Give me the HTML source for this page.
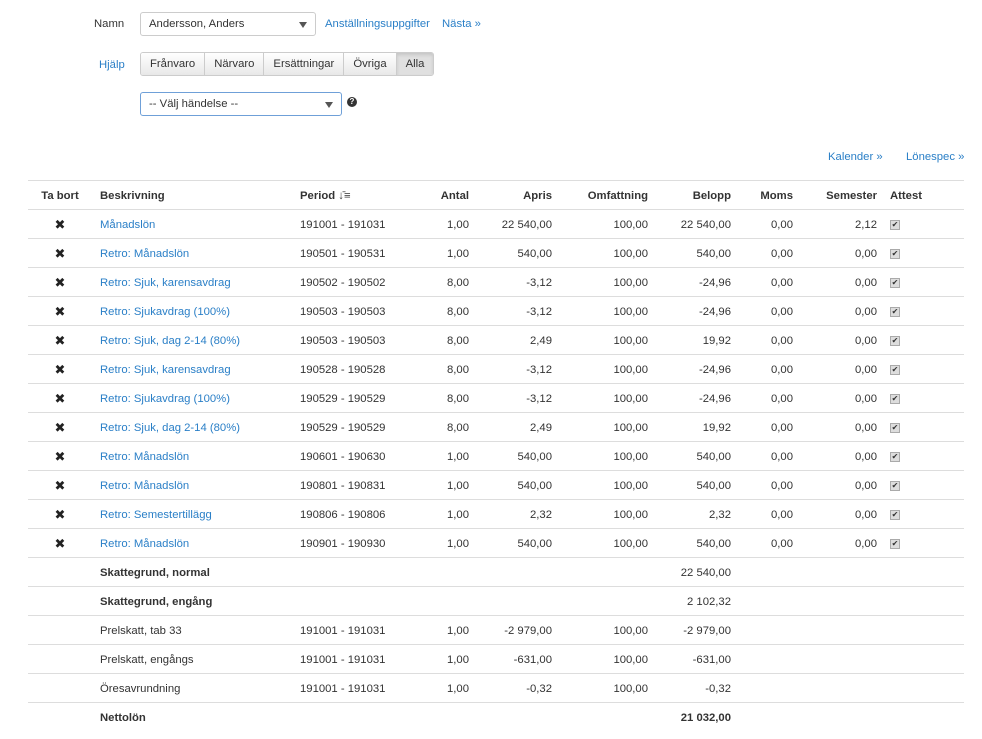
<!DOCTYPE html>
<html><head><meta charset="utf-8"><style>
body{margin:0;background:#fff;font-family:"Liberation Sans",Arial,sans-serif;font-size:11.3px;color:#333;width:982px;height:739px;overflow:hidden;position:relative}
a{color:#2a7fc7;text-decoration:none}
.abs{position:absolute}
.sel{position:absolute;border:1px solid #ccc;border-radius:3px;background:#fff;box-sizing:border-box;padding-left:8px;line-height:23px}
.sel:after{content:"";position:absolute;right:8px;top:9px;border-left:4px solid transparent;border-right:4px solid transparent;border-top:6px solid #555}
.btns{position:absolute;left:140px;top:52px;display:flex;border:1px solid #ccc;border-radius:3px;overflow:hidden}
.btns div{padding:0 9px;line-height:23px;height:22px;background:linear-gradient(#fff,#e8e8e8);border-left:1px solid #ccc}
.btns div:first-child{border-left:none}
.btns .act{background:#e0e0e0;box-shadow:inset 0 2px 3px rgba(0,0,0,.12)}
table{position:absolute;left:28px;top:180px;border-collapse:collapse;table-layout:fixed;width:936px}
td,th{height:29px;border-top:1px solid #ddd;padding:2px 8px 0;box-sizing:border-box;white-space:nowrap;overflow:hidden;font-size:11.3px}
th{text-align:left;font-weight:bold;color:#333}
.c{text-align:center}.r{text-align:right}
.x{font-size:13px;color:#222}
.cb{display:inline-block;width:8px;height:8px;border:1px solid #aaa;background:#ddd;font-size:8px;line-height:8px;text-align:center;color:#333;vertical-align:middle}
b{font-weight:bold}
</style></head><body>
<div class="abs" style="left:94px;top:18px">Namn</div>
<div class="sel" style="left:140px;top:12px;width:176px;height:24px">Andersson, Anders</div>
<a class="abs" style="left:325px;top:18px">Anställningsuppgifter</a>
<a class="abs" style="left:442px;top:18px">Nästa »</a>
<a class="abs" style="left:99px;top:59px">Hjälp</a>
<div class="btns"><div>Frånvaro</div><div>Närvaro</div><div>Ersättningar</div><div>Övriga</div><div class="act">Alla</div></div>
<div class="sel" style="left:140px;top:92px;width:202px;height:24px;border-color:#6fa0d8">-- Välj händelse --</div>
<div class="abs" style="left:347px;top:97px;width:10px;height:10px;border-radius:50%;background:#333;color:#fff;font-size:8px;line-height:10px;text-align:center;font-weight:bold">?</div>
<a class="abs" style="left:828px;top:151px">Kalender »</a>
<a class="abs" style="left:906px;top:151px">Lönespec »</a>
<table>
<colgroup><col style="width:64px"><col style="width:200px"><col style="width:108px"><col style="width:77px"><col style="width:83px"><col style="width:96px"><col style="width:83px"><col style="width:62px"><col style="width:84px"><col style="width:79px"></colgroup>
<tr><th class="c">Ta bort</th><th>Beskrivning</th><th>Period <span style="font-weight:normal">↓̄≡</span></th><th class="r">Antal</th><th class="r">Apris</th><th class="r">Omfattning</th><th class="r">Belopp</th><th class="r">Moms</th><th class="r">Semester</th><th style="padding-left:5px">Attest</th></tr>
<tr><td class="c x">✖</td><td><a>Månadslön</a></td><td>191001 - 191031</td><td class="r">1,00</td><td class="r">22 540,00</td><td class="r">100,00</td><td class="r">22 540,00</td><td class="r">0,00</td><td class="r">2,12</td><td style="padding-left:5px"><span class="cb">✔</span></td></tr>
<tr><td class="c x">✖</td><td><a>Retro: Månadslön</a></td><td>190501 - 190531</td><td class="r">1,00</td><td class="r">540,00</td><td class="r">100,00</td><td class="r">540,00</td><td class="r">0,00</td><td class="r">0,00</td><td style="padding-left:5px"><span class="cb">✔</span></td></tr>
<tr><td class="c x">✖</td><td><a>Retro: Sjuk, karensavdrag</a></td><td>190502 - 190502</td><td class="r">8,00</td><td class="r">-3,12</td><td class="r">100,00</td><td class="r">-24,96</td><td class="r">0,00</td><td class="r">0,00</td><td style="padding-left:5px"><span class="cb">✔</span></td></tr>
<tr><td class="c x">✖</td><td><a>Retro: Sjukavdrag (100%)</a></td><td>190503 - 190503</td><td class="r">8,00</td><td class="r">-3,12</td><td class="r">100,00</td><td class="r">-24,96</td><td class="r">0,00</td><td class="r">0,00</td><td style="padding-left:5px"><span class="cb">✔</span></td></tr>
<tr><td class="c x">✖</td><td><a>Retro: Sjuk, dag 2-14 (80%)</a></td><td>190503 - 190503</td><td class="r">8,00</td><td class="r">2,49</td><td class="r">100,00</td><td class="r">19,92</td><td class="r">0,00</td><td class="r">0,00</td><td style="padding-left:5px"><span class="cb">✔</span></td></tr>
<tr><td class="c x">✖</td><td><a>Retro: Sjuk, karensavdrag</a></td><td>190528 - 190528</td><td class="r">8,00</td><td class="r">-3,12</td><td class="r">100,00</td><td class="r">-24,96</td><td class="r">0,00</td><td class="r">0,00</td><td style="padding-left:5px"><span class="cb">✔</span></td></tr>
<tr><td class="c x">✖</td><td><a>Retro: Sjukavdrag (100%)</a></td><td>190529 - 190529</td><td class="r">8,00</td><td class="r">-3,12</td><td class="r">100,00</td><td class="r">-24,96</td><td class="r">0,00</td><td class="r">0,00</td><td style="padding-left:5px"><span class="cb">✔</span></td></tr>
<tr><td class="c x">✖</td><td><a>Retro: Sjuk, dag 2-14 (80%)</a></td><td>190529 - 190529</td><td class="r">8,00</td><td class="r">2,49</td><td class="r">100,00</td><td class="r">19,92</td><td class="r">0,00</td><td class="r">0,00</td><td style="padding-left:5px"><span class="cb">✔</span></td></tr>
<tr><td class="c x">✖</td><td><a>Retro: Månadslön</a></td><td>190601 - 190630</td><td class="r">1,00</td><td class="r">540,00</td><td class="r">100,00</td><td class="r">540,00</td><td class="r">0,00</td><td class="r">0,00</td><td style="padding-left:5px"><span class="cb">✔</span></td></tr>
<tr><td class="c x">✖</td><td><a>Retro: Månadslön</a></td><td>190801 - 190831</td><td class="r">1,00</td><td class="r">540,00</td><td class="r">100,00</td><td class="r">540,00</td><td class="r">0,00</td><td class="r">0,00</td><td style="padding-left:5px"><span class="cb">✔</span></td></tr>
<tr><td class="c x">✖</td><td><a>Retro: Semestertillägg</a></td><td>190806 - 190806</td><td class="r">1,00</td><td class="r">2,32</td><td class="r">100,00</td><td class="r">2,32</td><td class="r">0,00</td><td class="r">0,00</td><td style="padding-left:5px"><span class="cb">✔</span></td></tr>
<tr><td class="c x">✖</td><td><a>Retro: Månadslön</a></td><td>190901 - 190930</td><td class="r">1,00</td><td class="r">540,00</td><td class="r">100,00</td><td class="r">540,00</td><td class="r">0,00</td><td class="r">0,00</td><td style="padding-left:5px"><span class="cb">✔</span></td></tr>
<tr><td></td><td><b>Skattegrund, normal</b></td><td></td><td></td><td></td><td></td><td class="r">22 540,00</td><td></td><td></td><td></td></tr>
<tr><td></td><td><b>Skattegrund, engång</b></td><td></td><td></td><td></td><td></td><td class="r">2 102,32</td><td></td><td></td><td></td></tr>
<tr><td></td><td>Prelskatt, tab 33</td><td>191001 - 191031</td><td class="r">1,00</td><td class="r">-2 979,00</td><td class="r">100,00</td><td class="r">-2 979,00</td><td></td><td></td><td></td></tr>
<tr><td></td><td>Prelskatt, engångs</td><td>191001 - 191031</td><td class="r">1,00</td><td class="r">-631,00</td><td class="r">100,00</td><td class="r">-631,00</td><td></td><td></td><td></td></tr>
<tr><td></td><td>Öresavrundning</td><td>191001 - 191031</td><td class="r">1,00</td><td class="r">-0,32</td><td class="r">100,00</td><td class="r">-0,32</td><td></td><td></td><td></td></tr>
<tr><td></td><td><b>Nettolön</b></td><td></td><td></td><td></td><td></td><td class="r"><b>21 032,00</b></td><td></td><td></td><td></td></tr>
</table>
</body></html>
